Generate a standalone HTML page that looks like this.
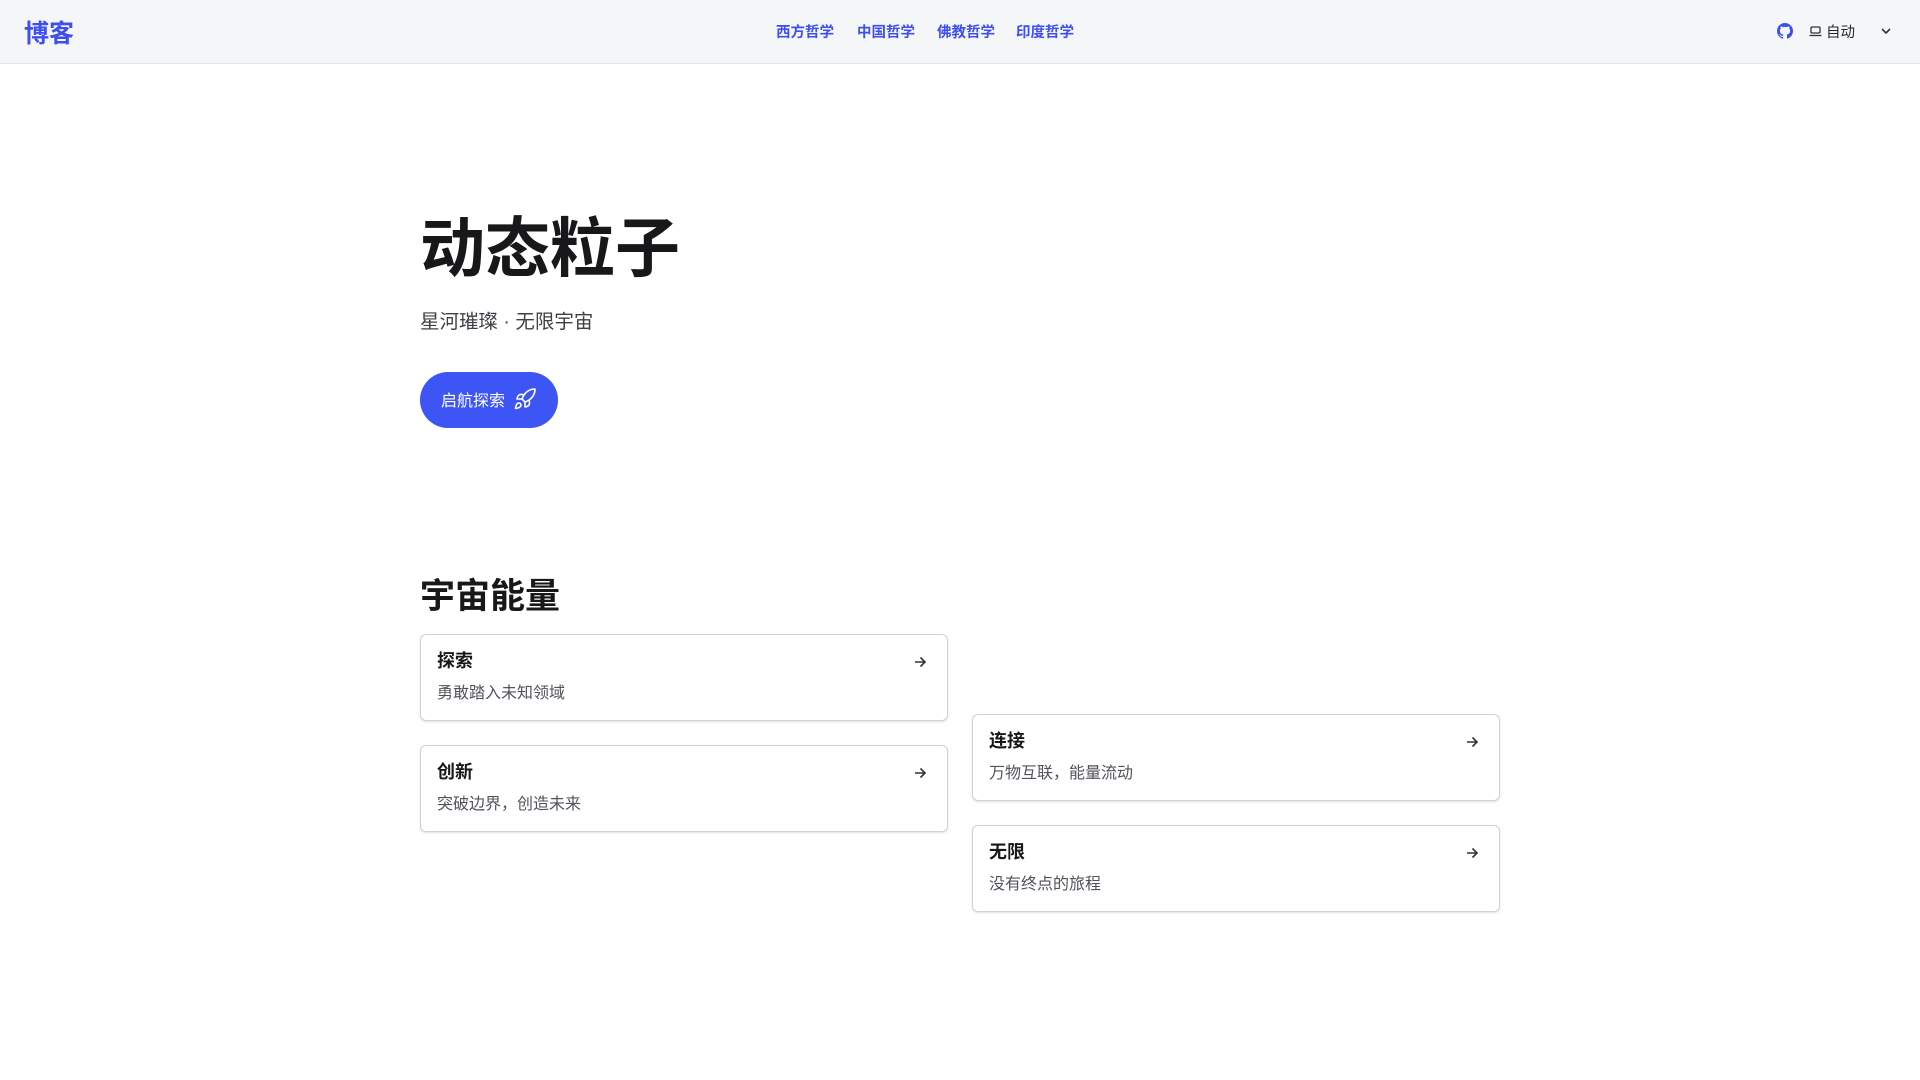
<!DOCTYPE html>
<html><head><meta charset="utf-8"><style>
*{margin:0;padding:0;box-sizing:border-box}
body{width:1920px;height:1080px;background:#fff;font-family:"Liberation Sans","Noto Sans CJK SC",sans-serif;color:#18181b;position:relative;overflow:hidden}
.hdr{position:absolute;left:0;top:0;width:1920px;height:64px;background:#f5f6f8;border-bottom:1px solid #e5e7eb}
.logo{position:absolute;left:24px;top:14px;font-size:25px;font-weight:700;color:#3d4ff0}
.nav{position:absolute;top:21px;font-size:14.5px;font-weight:700;color:#3d4ff0}
.abs{position:absolute}
h1{position:absolute;left:420px;top:204px;font-size:65px;font-weight:700;line-height:90px;color:#18181b}
.sub{position:absolute;left:420px;top:305px;font-size:19.5px;color:#3f3f46}
.btn{position:absolute;left:420px;top:372px;width:138px;height:56px;border-radius:28px;background:#3d55f5;color:#fff;font-size:16px;display:flex;align-items:center;padding-left:21px;padding-bottom:2px;gap:8px}
h2{position:absolute;left:420px;top:568px;font-size:35px;font-weight:700}
.card{position:absolute;width:528px;height:87px;border:1px solid #cfd1d6;border-radius:6px;box-shadow:0 1px 2px rgba(0,0,0,.12);background:#fff}
.card b{position:absolute;left:16px;top:12px;font-size:18px}
.card span{position:absolute;left:16px;top:44px;font-size:16px;color:#52525b}
.card svg{position:absolute;right:20px;top:20px}
</style></head><body>
<div class="hdr">
<div class="logo">博客</div>
<div class="nav" style="left:776px">西方哲学</div>
<div class="nav" style="left:857px">中国哲学</div>
<div class="nav" style="left:937px">佛教哲学</div>
<div class="nav" style="left:1016px">印度哲学</div>
<svg class="abs" style="left:1777px;top:23px" width="16" height="16" viewBox="0 0 16 16"><path fill="#3d4ff0" d="M8 0C3.58 0 0 3.58 0 8c0 3.540 2.29 6.53 5.47 7.59.4.07.55-.17.55-.38v-1.33c-2.230.48-2.7-1.07-2.7-1.07-.36-.92-.89-1.170-.89-1.17-.73-.5.06-.49.06-.49.8.06 1.23.83 1.23.83.71 1.23 1.87.87 2.33.66.07-.52.28-.87.5-1.07-1.78-.2-3.64-.89-3.64-3.95 0-.87.31-1.59.82-2.15-.08-.2-.36-1.020.08-2.12 0 0 .67-.21 2.2.82a7.6 7.6 0 014 0c1.53-1.04 2.2-.82 2.2-.82.44 1.1.16 1.92.08 2.12.51.56.82 1.27.82 2.15 0 3.07-1.87 3.75-3.65 3.95.29.25.54.73.54 1.48v2.2c0 .21.15.46.55.38A8 8 0 0016 8c0-4.42-3.58-8-8-8z"/></svg>
<svg class="abs" style="left:1809px;top:26px" width="13" height="11" viewBox="0 0 13 11"><rect x="2" y="1" width="9" height="6" rx="1" fill="none" stroke="#333" stroke-width="1.3"/><path d="M0.5 9.5h12" stroke="#333" stroke-width="1.3"/></svg>
<div class="abs" style="left:1826px;top:21px;font-size:14.5px;color:#27272a">自动</div>
<svg class="abs" style="left:1880px;top:26px" width="12" height="10" viewBox="0 0 12 10"><path d="M2 3l4 4 4-4" fill="none" stroke="#333" stroke-width="1.6"/></svg>
</div>
<h1>动态粒子</h1>
<div class="sub">星河璀璨 · 无限宇宙</div>
<div class="btn">启航探索 <svg width="24" height="24" viewBox="0 0 24 24" fill="none" stroke="#fff" stroke-width="1.6" stroke-linejoin="round"><path d="M4.5 16.5c-1.5 1.26-2 5-2 5s3.74-.5 5-2c.71-.84.7-2.130-.09-2.91a2.18 2.18 0 00-2.91-.09z"/><path d="M12 15l-3-3a22 22 0 012-3.95A12.88 12.88 0 0122 2c0 2.72-.78 7.5-6 11a22.35 22.35 0 01-4 2z"/><path d="M9 12H4s.55-3.03 2-4c1.62-1.08 5 0 5 0M12 15v5s3.03-.55 4-2c1.08-1.62 0-5 0-5"/></svg></div>
<h2>宇宙能量</h2>
<div class="card" style="left:420px;top:634px"><b>探索</b><span>勇敢踏入未知领域</span><svg width="14" height="14" viewBox="0 0 14 14" fill="none" stroke="#333" stroke-width="1.6"><path d="M2 7h10M7.5 2.5L12 7l-4.5 4.5"/></svg></div>
<div class="card" style="left:420px;top:745px"><b>创新</b><span>突破边界，创造未来</span><svg width="14" height="14" viewBox="0 0 14 14" fill="none" stroke="#333" stroke-width="1.6"><path d="M2 7h10M7.5 2.5L12 7l-4.5 4.5"/></svg></div>
<div class="card" style="left:972px;top:714px"><b>连接</b><span>万物互联，能量流动</span><svg width="14" height="14" viewBox="0 0 14 14" fill="none" stroke="#333" stroke-width="1.6"><path d="M2 7h10M7.5 2.5L12 7l-4.5 4.5"/></svg></div>
<div class="card" style="left:972px;top:825px"><b>无限</b><span>没有终点的旅程</span><svg width="14" height="14" viewBox="0 0 14 14" fill="none" stroke="#333" stroke-width="1.6"><path d="M2 7h10M7.5 2.5L12 7l-4.5 4.5"/></svg></div>
</body></html>
